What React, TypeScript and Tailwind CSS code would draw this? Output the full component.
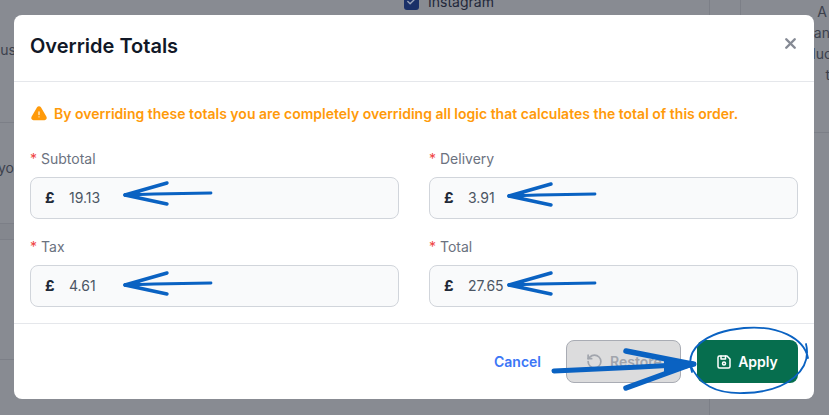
import { Check, RotateCcw, X } from "lucide-react";
import { HiExclamationTriangle } from "react-icons/hi2";
import { TbDeviceFloppy } from "react-icons/tb";

const INK = "#0a62c2";

function TotalField({ label, value }: { label: string; value: string }) {
  return (
    <div className="flex flex-col">
      <div className="flex h-5 items-center text-sm text-[#6b7280]">
        <span className="mr-1 text-[#ef4444]">*</span>
        {label}
      </div>
      <div className="mt-2 flex h-[42px] items-center rounded-lg border border-[#d1d5db] bg-[#f9fafb] pl-[14px] text-sm text-[#4b5563]">
        <span className="w-6 text-[15px] font-bold text-[#1f2937]">£</span>
        {value}
      </div>
    </div>
  );
}

// hand drawn arrow pointing left, (x, y) is the tip
function ScribbleArrow({ x, y }: { x: number; y: number }) {
  return (
    <g transform={`translate(${x} ${y})`} fill="none" stroke={INK} strokeLinecap="round">
      <path d="M1 0 L30 -1 L87 -2" strokeWidth="2.8" />
      <path d="M1 0 L43 -12" strokeWidth="3.4" />
      <path d="M1 0 L43 9" strokeWidth="3.4" />
      <path d="M0 0 L14 -4 L18 -1 L14 3 Z" fill={INK} stroke="none" />
    </g>
  );
}

function Annotations() {
  return (
    <svg className="absolute inset-0 h-full w-full" viewBox="0 0 829 415">
      <ScribbleArrow x={124} y={195} />
      <ScribbleArrow x={508} y={196} />
      <ScribbleArrow x={124} y={285} />
      <ScribbleArrow x={508} y={285} />
      <g fill="none" stroke={INK} strokeLinecap="round">
        <path d="M554 371 L640 367 L694 364" strokeWidth="5" />
        <path d="M626 351 L692 364" strokeWidth="5.5" />
        <path d="M626 388 L692 364" strokeWidth="5.5" />
        <path d="M664 359 L696 362 L696 366 L664 374 Z" fill={INK} stroke="none" />
        <path
          d="M692 372 C684 350 704 332 744 328 C778 325 804 338 808 358 M806 344 C812 368 790 392 744 393 C716 394 698 385 689 362"
          strokeWidth="1.8"
        />
      </g>
    </svg>
  );
}

function Backdrop() {
  return (
    <div className="flex h-[415px] w-[829px] overflow-hidden bg-[#888b92] font-['Inter',sans-serif] text-sm text-[#3c414d]">
      <div className="flex w-[710px] flex-col border-r border-[#7c7f87]">
        <div className="ml-[404px] -mt-[7px] flex h-[17px] items-center gap-[9px]">
          <span className="flex h-[17px] w-[15px] items-center justify-center rounded-[3px] bg-[#1a3068]">
            <Check size={11} strokeWidth={3} className="text-[#9aa3b8]" />
          </span>
          <span className="text-[#23283a]">Instagram</span>
        </div>
        <div className="h-[30px]" />
        <div className="flex h-[83px] items-start border-b border-[#7c7f87]">
          <span className="-ml-[10px]">Cust</span>
        </div>
        <div className="flex h-[101px] items-start border-b border-[#7c7f87] pt-[35px]">
          <span className="-ml-[2px]">yo</span>
        </div>
        <div className="h-[16px] border-b border-[#7c7f87] bg-[#84878e]" />
        <div className="h-[120px] border-b border-[#7c7f87]" />
      </div>
      <div className="w-[30px]" />
      <div className="flex h-[133px] w-[89px] flex-col items-end border-b border-l border-[#7c7f87] pr-0 pt-[1px] leading-[21px] whitespace-nowrap">
        <span className="mr-[2px] block">A</span>
        <span className="-mr-[1px] block">an</span>
        <span className="-mr-[3px] block">luc</span>
        <span className="-mr-[1px] block">t</span>
      </div>
    </div>
  );
}

export default function App() {
  return (
    <div className="relative h-[415px] w-[829px] overflow-hidden font-['Inter',sans-serif]">
      <Backdrop />
      <div className="absolute inset-0 pl-[14px] pt-[15px]">
        <div className="flex h-[384px] w-[800px] flex-col rounded-lg bg-white">
          <div className="flex h-[67px] items-center justify-between border-b border-[#e5e7eb] pl-4 pr-[15px]">
            <h2 className="-mt-[4px] text-xl font-semibold text-[#111827]">Override Totals</h2>
            <X size={17} strokeWidth={3.4} className="-mt-[10px] text-[#858a94]" />
          </div>
          <div className="flex h-[242px] flex-col border-b border-[#e5e7eb] px-4 pt-[22px]">
            <div className="flex h-5 items-center gap-[6px] text-sm font-semibold text-[#ff9a0a]">
              <HiExclamationTriangle size={18} />
              By overriding these totals you are completely overriding all logic that calculates the total of this order.
            </div>
            <div className="mt-[25px] grid grid-cols-2 gap-x-[30px] gap-y-[18px]">
              <TotalField label="Subtotal" value="19.13" />
              <TotalField label="Delivery" value="3.91" />
              <TotalField label="Tax" value="4.61" />
              <TotalField label="Total" value="27.65" />
            </div>
          </div>
          <div className="flex flex-1 items-start justify-end pr-4 pt-4">
            <button className="mr-[25px] h-[43px] text-sm font-semibold text-[#3b76f6]">Cancel</button>
            <button className="mr-4 flex h-[43px] w-[115px] items-center gap-[7px] rounded-lg border border-[#a9acb4] bg-[#dcdcdd] pl-[19px] text-sm font-semibold text-[#a1a5ad]">
              <RotateCcw size={17} strokeWidth={2.4} />
              Restore
            </button>
            <button className="flex h-[43px] w-[101px] items-center justify-center gap-[5px] rounded-lg bg-[#066e4e] pr-[2px] text-sm font-semibold text-white">
              <TbDeviceFloppy size={18} />
              Apply
            </button>
          </div>
        </div>
      </div>
      <Annotations />
    </div>
  );
}
